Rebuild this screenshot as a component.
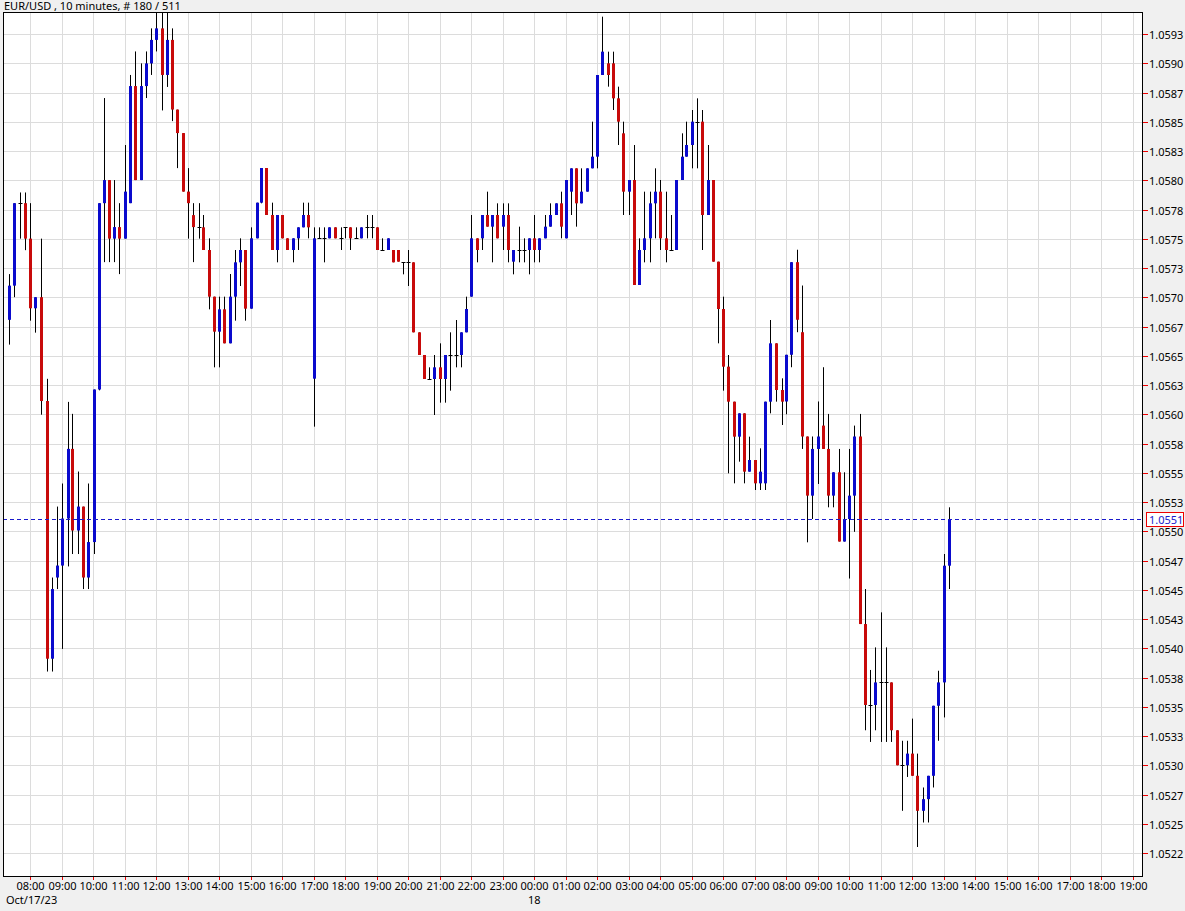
const BLUE = '#0a0acd'
const RED = '#c80a0a'

// raw readings: [x, colour, bodyTop, bodyBottom, wickTop, wickBottom], in each crop's own units
const SEGMENTS = [
  {
    ox: 0, oy: 10, sx: 3, sy: 2.34,
    c: [
      [28, 'B', 645, 725, 618, 783], [43, 'B', 452, 645, 452, 672], [60, 'D', 452, 452, 427, 535],
      [76, 'R', 452, 535, 427, 562], [91, 'R', 535, 698, 452, 727], [106, 'B', 672, 698, 672, 755],
      [124, 'R', 672, 915, 535, 947], [140, 'R', 915, 1518, 863, 1548], [155, 'B', 1355, 1518, 1328, 1548],
      [170, 'B', 1300, 1328, 1162, 1355], [187, 'B', 1190, 1300, 1108, 1495], [203, 'B', 1027, 1190, 917, 1302],
      [217, 'R', 1027, 1218, 945, 1273], [233, 'B', 1162, 1218, 1080, 1273], [250, 'R', 1162, 1328, 1162, 1355],
      [265, 'B', 1245, 1328, 1108, 1355], [281, 'B', 888, 1245, 888, 1273], [296, 'B', 452, 888, 452, 890],
      [313, 'B', 398, 452, 206, 590], [328, 'R', 398, 535, 398, 590], [343, 'B', 508, 535, 398, 590],
      [358, 'R', 508, 535, 452, 618], [376, 'B', 425, 535, 316, 535], [391, 'B', 178, 452, 152, 452],
      [406, 'R', 178, 398, 97, 398], [422, 'B', 178, 398, 125, 398], [438, 'B', 125, 178, 97, 206],
      [454, 'B', 70, 125, 43, 152], [469, 'B', 43, 70, 5, 97], [485, 'R', 43, 152, 5, 235],
      [502, 'B', 70, 152, 5, 180], [517, 'R', 70, 233, 43, 260], [532, 'R', 233, 288, 233, 370],
      [548, 'R', 288, 425, 288, 425], [565, 'R', 425, 452, 370, 535], [580, 'R', 480, 508, 452, 590],
      [596, 'D', 508, 508, 452, 535],
    ],
  },
  {
    ox: 195, oy: 150, sx: 3, sy: 3,
    c: [
      [25, 'R', 232, 300, 195, 300], [42, 'R', 300, 440, 265, 478], [58, 'R', 440, 545, 440, 652],
      [73, 'B', 478, 545, 440, 652], [88, 'R', 478, 580, 440, 580], [105, 'B', 440, 580, 372, 580],
      [120, 'B', 337, 440, 300, 512], [136, 'B', 300, 337, 265, 408], [151, 'R', 300, 476, 300, 512],
      [168, 'B', 265, 476, 232, 476], [185, 'B', 158, 265, 158, 265], [198, 'B', 54, 158, 54, 160],
      [213, 'R', 54, 195, 54, 195], [231, 'R', 195, 300, 158, 300], [246, 'B', 195, 300, 195, 337],
      [262, 'R', 195, 265, 195, 265], [277, 'R', 265, 300, 265, 300], [295, 'B', 265, 300, 265, 337],
      [310, 'B', 232, 265, 232, 300], [325, 'B', 195, 232, 158, 232], [340, 'R', 195, 232, 158, 265],
      [358, 'B', 265, 686, 232, 830], [373, 'D', 265, 265, 232, 265], [388, 'D', 265, 265, 232, 337],
      [403, 'B', 232, 265, 232, 265], [420, 'R', 232, 265, 232, 265], [437, 'D', 265, 265, 232, 300],
      [451, 'D', 232, 232, 232, 265], [466, 'R', 232, 265, 232, 300], [483, 'D', 265, 265, 232, 265],
      [498, 'B', 232, 265, 232, 265], [515, 'D', 232, 232, 195, 265], [530, 'D', 232, 232, 195, 265],
      [547, 'R', 232, 300, 232, 300], [562, 'D', 300, 300, 265, 300], [578, 'B', 265, 300, 265, 300],
      [593, 'R', 300, 337, 300, 337],
    ],
  },
  {
    ox: 390, oy: 10, sx: 3, sy: 3,
    c: [
      [25, 'R', 720, 755, 720, 755], [40, 'D', 757, 757, 757, 793], [55, 'D', 757, 757, 720, 828],
      [70, 'R', 757, 967, 757, 967], [88, 'R', 967, 1035, 967, 1035], [103, 'R', 1035, 1107, 1035, 1107],
      [118, 'D', 1107, 1107, 1072, 1107], [133, 'B', 1072, 1107, 1035, 1215], [150, 'R', 1072, 1107, 1000, 1178],
      [165, 'B', 1035, 1107, 1035, 1178], [180, 'D', 1035, 1035, 967, 1142], [197, 'D', 1035, 1035, 930, 1072],
      [213, 'B', 967, 1035, 967, 1072], [228, 'B', 897, 967, 860, 967], [244, 'B', 685, 860, 615, 860],
      [260, 'R', 685, 720, 685, 757], [276, 'B', 615, 685, 615, 720], [292, 'R', 615, 650, 545, 650],
      [307, 'B', 615, 650, 615, 757], [322, 'R', 615, 685, 580, 685], [340, 'B', 615, 650, 580, 720],
      [355, 'R', 615, 720, 580, 757], [370, 'B', 720, 755, 720, 793], [386, 'D', 720, 720, 650, 757],
      [403, 'D', 720, 720, 685, 757], [418, 'B', 685, 720, 685, 793], [433, 'R', 685, 720, 615, 757],
      [448, 'B', 685, 720, 685, 757], [465, 'B', 650, 685, 615, 685], [481, 'B', 615, 650, 580, 650],
      [497, 'B', 580, 615, 580, 615], [512, 'R', 580, 650, 545, 685], [529, 'B', 510, 685, 510, 685],
      [544, 'B', 475, 545, 475, 615], [559, 'R', 475, 580, 475, 650], [574, 'B', 545, 580, 475, 580],
      [592, 'B', 475, 545, 475, 545],
    ],
  },
  {
    ox: 585, oy: 10, sx: 3, sy: 3,
    c: [
      [22, 'B', 440, 475, 335, 475], [37, 'B', 195, 440, 195, 475], [52, 'B', 125, 195, 20, 195],
      [70, 'R', 160, 195, 125, 230], [85, 'R', 160, 265, 125, 300], [100, 'R', 265, 335, 230, 405],
      [115, 'R', 370, 545, 335, 615], [132, 'B', 510, 545, 510, 615], [148, 'R', 510, 825, 405, 825],
      [163, 'B', 720, 825, 685, 825], [178, 'B', 685, 720, 545, 757], [196, 'B', 580, 685, 545, 757],
      [211, 'B', 545, 580, 475, 685], [226, 'R', 545, 685, 510, 720], [242, 'R', 685, 720, 545, 757],
      [258, 'D', 720, 720, 615, 720], [274, 'B', 510, 720, 510, 720], [290, 'B', 440, 510, 370, 510],
      [304, 'B', 405, 440, 335, 440], [322, 'B', 335, 405, 300, 475], [337, 'D', 335, 335, 265, 475],
      [352, 'R', 335, 615, 300, 720], [368, 'B', 510, 615, 405, 615], [385, 'R', 510, 755, 510, 755],
      [400, 'R', 755, 897, 755, 1000], [415, 'R', 897, 1070, 860, 1142], [430, 'R', 1070, 1175, 1035, 1390],
      [448, 'R', 1175, 1280, 1175, 1420], [463, 'B', 1210, 1280, 1210, 1355], [478, 'R', 1210, 1385, 1210, 1420],
      [493, 'B', 1350, 1385, 1280, 1385], [510, 'R', 1350, 1420, 1350, 1440], [525, 'B', 1385, 1420, 1315, 1440],
      [540, 'B', 1175, 1420, 1175, 1440], [556, 'B', 1000, 1175, 930, 1210], [573, 'R', 1000, 1140, 1000, 1175],
      [590, 'R', 1140, 1175, 1105, 1245],
    ],
  },
  {
    ox: 780, oy: 240, sx: 3, sy: 2.57,
    c: [
      [19, 'B', 295, 415, 295, 448], [34, 'B', 57, 295, 57, 327], [52, 'R', 57, 205, 25, 237],
      [67, 'R', 237, 505, 117, 537], [82, 'R', 505, 657, 505, 777], [97, 'B', 537, 657, 505, 717],
      [114, 'B', 505, 537, 415, 627], [130, 'R', 477, 537, 327, 537], [145, 'R', 537, 657, 447, 687],
      [160, 'B', 597, 657, 597, 687], [178, 'R', 597, 775, 537, 775], [193, 'B', 717, 775, 597, 775],
      [208, 'B', 657, 717, 537, 870], [223, 'B', 505, 657, 477, 750], [240, 'R', 505, 987, 447, 987],
      [256, 'R', 987, 1195, 897, 1260], [271, 'D', 1195, 1195, 1105, 1290], [286, 'B', 1137, 1195, 1047, 1260],
      [304, 'D', 1137, 1137, 957, 1290], [318, 'D', 1137, 1137, 1047, 1290], [334, 'R', 1137, 1260, 1137, 1290],
      [350, 'R', 1260, 1350, 1260, 1350], [366, 'D', 1350, 1350, 1287, 1467], [382, 'B', 1320, 1350, 1287, 1380],
      [397, 'R', 1320, 1377, 1230, 1377], [412, 'R', 1377, 1467, 1320, 1560], [430, 'B', 1437, 1467, 1407, 1497],
      [445, 'B', 1377, 1437, 1377, 1497], [460, 'B', 1197, 1377, 1197, 1407], [475, 'B', 1137, 1197, 1107, 1287],
      [492, 'B', 837, 1137, 807, 1227], [508, 'B', 717, 837, 687, 897],
    ],
  },
]

const candles = SEGMENTS.flatMap((s) =>
  s.c.map(([zx, col, bt, bb, wt, wb]) => ({
    x: Math.round(s.ox + zx / s.sx) + 0.5,
    col,
    bt: s.oy + bt / s.sy,
    bb: s.oy + bb / s.sy,
    wt: Math.max(13, s.oy + wt / s.sy),
    wb: s.oy + wb / s.sy,
  }))
)

const LEFT = 3
const TOP = 12
const RIGHT = 1143
const BOTTOM = 876

const priceLabels = [
  '1.0593', '1.0590', '1.0587', '1.0585', '1.0583', '1.0580', '1.0578', '1.0575', '1.0573', '1.0570',
  '1.0567', '1.0565', '1.0563', '1.0560', '1.0558', '1.0555', '1.0553', '1.0550', '1.0547', '1.0545',
  '1.0543', '1.0540', '1.0538', '1.0535', '1.0533', '1.0530', '1.0527', '1.0525', '1.0522',
]
const hours = [
  '08:00', '09:00', '10:00', '11:00', '12:00', '13:00', '14:00', '15:00', '16:00', '17:00', '18:00', '19:00',
  '20:00', '21:00', '22:00', '23:00', '00:00', '01:00', '02:00', '03:00', '04:00', '05:00', '06:00', '07:00',
  '08:00', '09:00', '10:00', '11:00', '12:00', '13:00', '14:00', '15:00', '16:00', '17:00', '18:00', '19:00',
]

const gy = (k) => Math.round(34 + 29.25 * k) + 0.5
const gx = (k) => Math.round(30 + 31.5 * k) + 0.5

export default function App() {
  return (
    <div className="relative w-[1185px] h-[911px] bg-[#f0f0f0] overflow-hidden font-['Liberation_Sans',Arial,sans-serif] text-[11px] text-black">
      <div className="absolute left-[4px] top-0 leading-[12px] whitespace-pre">EUR/USD , 10 minutes, # 180 / 511</div>
      <svg width="1185" height="911" className="block">
        <rect x={LEFT} y={TOP} width={RIGHT - LEFT} height={BOTTOM - TOP} fill="#fff" />
        {priceLabels.map((p, k) => (
          <g key={p}>
            <line x1={LEFT} x2={RIGHT} y1={gy(k)} y2={gy(k)} stroke="#dcdcdc" />
            <line x1={RIGHT} x2={RIGHT + 5} y1={gy(k)} y2={gy(k)} stroke="#e00" />
            <text x={RIGHT + 6} y={gy(k) + 4} fontSize="11" fill="#000">{p}</text>
          </g>
        ))}
        {hours.map((h, k) => (
          <g key={k}>
            <line x1={gx(k)} x2={gx(k)} y1={TOP} y2={BOTTOM} stroke="#dcdcdc" />
            <line x1={gx(k)} x2={gx(k)} y1={BOTTOM} y2={BOTTOM + 4} stroke="#e00" />
            <text x={gx(k)} y={890} fontSize="11" textAnchor="middle" fill="#000">{h}</text>
          </g>
        ))}
        <text x={6} y={904} fontSize="11" fill="#000">Oct/17/23</text>
        <text x={528} y={904} fontSize="11" fill="#000">18</text>

        {candles.map((c, i) => (
          <g key={i}>
            <line x1={c.x} x2={c.x} y1={c.wt} y2={c.wb} stroke="#000" />
            {c.col === 'D' ? (
              <line x1={c.x - 2} x2={c.x + 2} y1={Math.round(c.bt) + 0.5} y2={Math.round(c.bt) + 0.5} stroke="#000" />
            ) : (
              <rect x={c.x - 1.5} y={c.bt} width="3" height={Math.max(1, c.bb - c.bt)} fill={c.col === 'B' ? BLUE : RED} />
            )}
          </g>
        ))}

        <line x1={LEFT} x2={RIGHT} y1={519.5} y2={519.5} stroke="#1a1acc" strokeDasharray="4 3" />
        <rect x={LEFT + 0.5} y={TOP + 0.5} width={RIGHT - LEFT - 1} height={BOTTOM - TOP} fill="none" stroke="#000" />
        <rect x={1146.5} y={512.5} width={37} height={14} fill="#fff" stroke="#e00" />
        <text x={1149} y={523.5} fontSize="11" fill="#1a1acc">1.0551</text>
      </svg>
    </div>
  )
}
